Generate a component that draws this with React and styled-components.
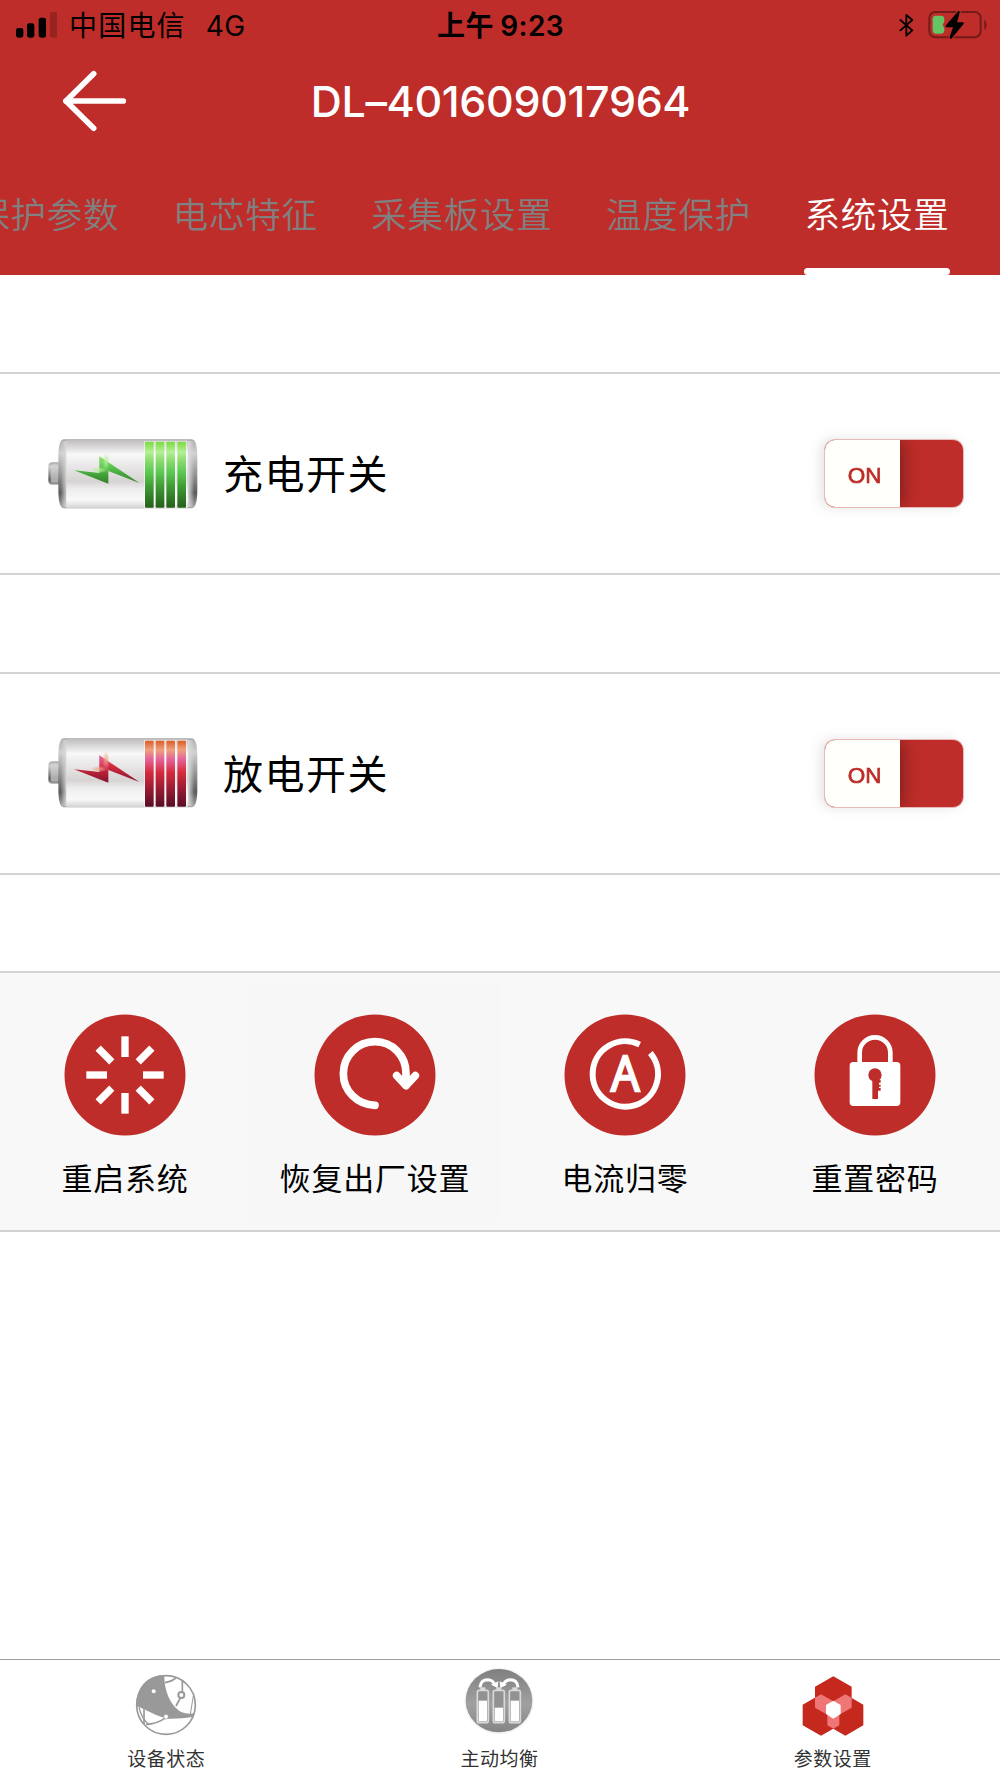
import styled, { createGlobalStyle } from "styled-components";

const RED = "#be2d29";

const GlobalStyle = createGlobalStyle`
  * {
    box-sizing: border-box;
  }

  body {
    margin: 0;
    background-color: #ffffff;
    font-family: Inter, "Noto Sans CJK SC", sans-serif;
    color: #000000;
  }

  svg {
    display: block;
    flex-shrink: 0;
  }
`;

const Screen = styled.div`
  display: flex;
  flex-direction: column;
  width: 1000px;
  height: 1778px;
  overflow: hidden;
`;

const Header = styled.header`
  display: flex;
  flex-direction: column;
  height: 275px;
  background-color: ${RED};
`;

const StatusBar = styled.div`
  display: grid;
  grid-template-columns: 1fr auto 1fr;
  align-items: center;
  height: 50px;
  padding: 0 12px 0 16px;
  font-size: 28px;
  line-height: 48px;
`;

const StatusGroup = styled.div`
  display: flex;
  align-items: center;
  justify-content: ${({ $end }) => ($end ? "flex-end" : "flex-start")};
  gap: ${({ $gap }) => $gap}px;
`;

const Carrier = styled.span`
  padding-top: 2px;
  letter-spacing: 1.2px;
`;

const Network = styled.span`
  margin-left: 8px;
  padding-top: 2px;
  letter-spacing: 0.3px;
`;

const Clock = styled.div`
  padding: 2px 3px 0 0;
  font-weight: 600;
  letter-spacing: 0.4px;
  word-spacing: -1px;
`;

const TitleBar = styled.div`
  display: grid;
  grid-template-columns: 200px 1fr 200px;
  align-items: center;
  height: 101px;
  padding-left: 1px;
`;

const BackButton = styled.button`
  display: flex;
  padding: 0 0 0 61px;
  border: none;
  background: none;
`;

const Title = styled.h1`
  margin: 0;
  color: #ffffff;
  font-size: 43px;
  font-weight: 450;
  letter-spacing: -0.35px;
  text-align: center;
  white-space: nowrap;
`;

const Tabs = styled.nav`
  display: flex;
  justify-content: flex-end;
  gap: 53.5px;
  height: 124px;
  padding-right: 50.5px;
`;

const Tab = styled.div`
  display: flex;
  flex-direction: column;
  justify-content: space-between;
  flex-shrink: 0;
  color: ${({ $active }) => ($active ? "#ffffff" : "#808080")};
  font-size: 35.5px;
  font-weight: 350;
  letter-spacing: 0.75px;
  line-height: 50px;
  padding-top: 40px;
  white-space: nowrap;

  &::after {
    content: "";
    height: 7px;
    border-radius: 4px;
    background-color: ${({ $active }) => ($active ? "#ffffff" : "transparent")};
  }
`;

const Content = styled.main`
  display: flex;
  flex-direction: column;
  flex: 1;
  padding-top: 97px;
`;

const SwitchRow = styled.section`
  display: flex;
  align-items: center;
  height: 203px;
  margin-bottom: 96.5px;
  padding: 0 36px 0 48px;
  border-top: 2px solid #d3d3d3;
  border-bottom: 2px solid #d3d3d3;
`;

const SwitchLabel = styled.span`
  flex: 1;
  padding: 3px 0 0 25px;
  font-size: 40px;
  letter-spacing: 1.5px;
  line-height: 60px;
`;

const Toggle = styled.button`
  display: flex;
  width: 140px;
  height: 69px;
  padding: 0;
  overflow: hidden;
  border: 1px solid #e9b9b8;
  border-radius: 11px;
  background-color: ${RED};
`;

const ToggleShadow = styled.div`
  border-radius: 11px;
  background: radial-gradient(closest-side, rgba(0, 0, 0, 0.2), transparent);
  filter: drop-shadow(-4px 0 6px rgba(0, 0, 0, 0.1));
`;

const Knob = styled.span`
  display: flex;
  align-items: center;
  justify-content: center;
  width: 75px;
  height: 100%;
  padding: 5px 0 0 4px;
  background-color: #fffffc;
  box-shadow: 0 0 18px rgba(0, 0, 0, 0.45);
  color: ${RED};
  font-family: "Liberation Sans", sans-serif;
  font-size: 22.5px;
  -webkit-text-stroke: 0.7px ${RED};
`;

const Actions = styled.section`
  display: grid;
  grid-template-columns: repeat(4, 250px);
  height: 261px;
  padding: 12px 0;
  border-top: 2px solid #d3d3d3;
  border-bottom: 2px solid #d3d3d3;
  background-color: #f8f8f8;
`;

const Action = styled.div`
  display: flex;
  flex-direction: column;
  align-items: center;
  gap: 20px;
  padding-top: 29px;
  background-color: ${({ $pressed }) => ($pressed ? "#f7f7f7" : "transparent")};
  font-size: 31px;
  letter-spacing: 0.8px;
  line-height: 45px;
  white-space: nowrap;
`;

const BottomBar = styled.footer`
  display: grid;
  grid-template-columns: repeat(3, 1fr);
  height: 119px;
  border-top: 1px solid #a0a0a0;
`;

const BottomItem = styled.div`
  display: flex;
  flex-direction: column;
  align-items: center;
  justify-content: space-between;
  padding: 4px 1px 4px 0;
  color: #333333;
  font-size: 19px;
  letter-spacing: 0.5px;
  line-height: 28px;
`;

const SignalIcon = () => (
  <svg width="41" height="26" viewBox="0 0 123 78">
    <rect x="0" y="48" width="22" height="29" rx="7" />
    <rect x="33" y="34" width="22" height="43" rx="7" />
    <rect x="68" y="17" width="22" height="60" rx="7" />
    <rect x="102" y="0" width="22" height="77" rx="7" opacity="0.2" />
  </svg>
);

const BluetoothIcon = () => (
  <svg width="15" height="26" viewBox="0 -4 45 78" fill="none" stroke="#000" strokeWidth="5.5" strokeLinejoin="round" strokeLinecap="round">
    <path d="M4 20 L40 51 L22 67 V5 L40 20 L4 51" />
  </svg>
);

const PhoneBatteryIcon = () => (
  <svg width="60" height="30" viewBox="0 0 180 90">
    <rect x="4" y="6" width="154" height="76" rx="18" fill="none" stroke="#741b19" strokeWidth="6" />
    <path d="M169 28 Q176 33 176 44 Q176 55 169 60 Z" fill="#741b19" />
    <path d="M24 17 H38 Q49 17 49 27 V34 L44 44 L49 55 V60 Q49 71 38 71 H24 Q14 71 14 60 V27 Q14 17 24 17Z" fill="#65c466" />
    <path
      d="M91 3 Q96 2 95 8 L87 37 H106 Q109 39 106 43 L70 86 Q64 88 65 81 L75 52 H55 Q51 50 54 46 Z"
      fill="#000"
      stroke={RED}
      strokeWidth="7"
      paintOrder="stroke"
    />
  </svg>
);

const BackIcon = () => (
  <svg width="66" height="64" viewBox="0 0 198 192" fill="none" stroke="#fff" strokeWidth="17" strokeLinecap="round" strokeLinejoin="round">
    <path d="M95 14 L12 96 L95 178" />
    <path d="M12 96 H184" />
  </svg>
);

const BatteryIcon = ({ id, colors }) => (
  <svg width="150" height="70" viewBox="54 56 450 210">
    <defs>
      <linearGradient id={`${id}-body`} x1="0" y1="0" x2="0" y2="1">
        <stop offset="0" stopColor="#bcbaba" />
        <stop offset="0.08" stopColor="#d2d0d0" />
        <stop offset="0.22" stopColor="#f8f8f8" />
        <stop offset="0.42" stopColor="#e6e4e4" />
        <stop offset="0.61" stopColor="#d6d3d3" />
        <stop offset="0.72" stopColor="#eeeded" />
        <stop offset="0.88" stopColor="#f9f9f9" />
        <stop offset="1" stopColor="#d2d2d2" />
      </linearGradient>
      <linearGradient id={`${id}-end`} x1="0" y1="0" x2="0" y2="1">
        <stop offset="0" stopColor="#aaa" />
        <stop offset="0.2" stopColor="#d0d0d0" />
        <stop offset="0.5" stopColor="#959595" />
        <stop offset="0.78" stopColor="#5c5c5c" />
        <stop offset="1" stopColor="#a8a8a8" />
      </linearGradient>
      <linearGradient id={`${id}-side`} x1="0" y1="0" x2="1" y2="0">
        <stop offset="0" stopColor="#dcdcdc" stopOpacity="0" />
        <stop offset="1" stopColor="#dcdcdc" />
      </linearGradient>
      <linearGradient id={`${id}-bars`} x1="0" y1="64" x2="0" y2="262" gradientUnits="userSpaceOnUse">
        {colors.map(([offset, color]) => (
          <stop key={offset} offset={offset} stopColor={color} />
        ))}
      </linearGradient>
      <linearGradient id={`${id}-bolt`} x1="0" y1="70" x2="0" y2="215" gradientUnits="userSpaceOnUse">
        {colors.map(([offset, color]) => (
          <stop key={offset} offset={offset} stopColor={color} />
        ))}
      </linearGradient>
      <radialGradient id={`${id}-glow`}>
        <stop offset="0" stopColor={colors[1][1]} stopOpacity="0.9" />
        <stop offset="1" stopColor={colors[1][1]} stopOpacity="0" />
      </radialGradient>
    </defs>
    <rect x="55" y="126" width="45" height="67" rx="12" fill={`url(#${id}-end)`} />
    <rect x="62" y="132" width="24" height="54" rx="8" fill="#d4d4d4" opacity="0.65" />
    <path d="M102 57 H484 Q502 57 502 110 V210 Q502 264 484 264 H102 Q85 264 85 210 V110 Q85 57 102 57Z" fill={`url(#${id}-end)`} />
    <rect x="92" y="62" width="20" height="198" fill={`url(#${id}-side)`} />
    <rect x="473" y="62" width="20" height="198" fill={`url(#${id}-side)`} transform="rotate(180 483 161)" />
    <rect x="109" y="57" width="365" height="207" fill={`url(#${id}-body)`} />
    {[345, 377, 409, 442].map((x) => (
      <g key={x}>
        <rect x={x - 3} y="62" width="32" height="202" fill="#fff" opacity="0.5" />
        <rect x={x} y="64" width="26" height="198" rx="3" fill={`url(#${id}-bars)`} />
      </g>
    ))}
    <path d="M132 150 L208 158 V108 L328 188 L235 152 V190 Z" fill={`url(#${id}-bolt)`} />
    <path d="M208 158 V108 L236 127 V152 Z" fill={colors[2][1]} opacity="0.3" />
    <ellipse cx="228" cy="122" rx="11" ry="26" fill={`url(#${id}-glow)`} />
    <ellipse cx="206" cy="149" rx="24" ry="9" fill={`url(#${id}-glow)`} />
  </svg>
);

const greenStops = [
  [0, "#7bdc3c"],
  [0.16, "#b5ef98"],
  [0.28, "#8edc72"],
  [0.46, "#5cc953"],
  [0.68, "#3f9b35"],
  [1, "#255f1a"],
];

const redStops = [
  [0, "#df5c24"],
  [0.14, "#eda17c"],
  [0.28, "#e5639b"],
  [0.48, "#d52b3c"],
  [0.7, "#a11c34"],
  [1, "#580d27"],
];

const Disc = ({ children }) => (
  <svg width="122" height="122" viewBox="0 0 366 366">
    <circle cx="183" cy="183" r="181.5" fill={RED} />
    {children}
  </svg>
);

const RestartIcon = () => (
  <Disc>
    {[0, 45, 90, 135, 180, 225, 270, 315].map((angle) => (
      <rect
        key={angle}
        x="172"
        y={angle % 90 ? 69 : 67}
        width="22"
        height={angle % 90 ? 58 : 62}
        fill="#fff"
        transform={`rotate(${angle} 183 183)`}
      />
    ))}
  </Disc>
);

const ResetIcon = () => (
  <Disc>
    <g fill="none" stroke="#fff" strokeWidth="23" strokeLinecap="round" strokeLinejoin="round">
      <path d="M183 274 C130 272 88 231 88 179 C88 125 131 83 183 83 C236 83 276 126 276 178 V214" />
      <path d="M248 185 L276 215 L304 185" />
    </g>
    <path d="M250 186 H302 L276 215Z" fill="#fff" />
  </Disc>
);

const ZeroIcon = () => (
  <Disc>
    <path d="M227 92 A98 98 0 1 0 259 117" fill="none" stroke="#fff" strokeWidth="18" />
    <text
      x="184"
      y="232"
      fill="#fff"
      stroke="#fff"
      strokeWidth="7"
      fontFamily="Open Sans"
      fontSize="147"
      textAnchor="middle"
      textLength="86"
      lengthAdjust="spacingAndGlyphs"
    >
      A
    </text>
  </Disc>
);

const LockIcon = () => (
  <Disc>
    <path d="M137 150 V116 A46 46 0 0 1 229 116 V150" fill="none" stroke="#fff" strokeWidth="14" />
    <rect x="107" y="144" width="152" height="132" rx="11" fill="#fff" />
    <circle cx="183" cy="183" r="20" fill={RED} />
    <path d="M175 195 H191 V198 H200 V206 H195 V212 H200 V218 H195 V222 H200 V230 H192 V255 H175Z" fill={RED} />
  </Disc>
);

const DeviceIcon = () => (
  <svg width="64" height="68" viewBox="104 66 192 204">
    <g fill="none" stroke="#999" strokeWidth="5">
      <circle cx="200" cy="165" r="88" />
      <path d="M196 98 Q218 95 230 83" />
      <path d="M249 92 V125 M243 144 L230 168" />
      <circle cx="246" cy="135" r="9" strokeWidth="6" />
      <path d="M134 178 V222 M140 223 Q172 223 200 203" />
      <path d="M119 172 Q126 205 150 225" strokeWidth="4" />
      <path d="M272 198 L282 138" strokeWidth="3" />
    </g>
    <path d="M195 75 C194 130 220 174 248 187 Q263 194 284 190 L280 201 Q245 207 205 206 C170 198 145 181 112 168 C108 115 145 73 195 75Z" fill="#999" />
    <circle cx="163" cy="124" r="6" fill="#fff" />
    <circle cx="200" cy="200" r="7" fill="#fff" stroke="#999" strokeWidth="2" />
  </svg>
);

const BalanceIcon = () => (
  <svg width="72" height="70" viewBox="100 44 216 210">
    <defs>
      <linearGradient id="balance" x1="0" y1="0" x2="0" y2="1">
        <stop offset="0" stopColor="#7f7f7f" />
        <stop offset="0.55" stopColor="#a0a0a0" />
        <stop offset="1" stopColor="#858585" />
      </linearGradient>
    </defs>
    <ellipse cx="208" cy="149" rx="104" ry="100" fill="#f4f4f4" />
    <ellipse cx="208" cy="148" rx="100" ry="95" fill="url(#balance)" />
    <g fill="none" stroke="#fff" strokeWidth="9">
      <path d="M151 108 Q153 85 174 85 Q189 86 195 99" />
      <path d="M265 108 Q263 85 242 85 Q227 86 221 99" />
    </g>
    <path d="M184 100 L204 110 L206 90Z M232 100 L212 110 L210 90Z" fill="#fff" />
    {[
      [143, 148],
      [191, 169],
      [239, 148],
    ].map(([x, level]) => (
      <g key={x}>
        <rect x={x + 9} y="108" width="15" height="10" fill="#ddd" />
        <rect x={x} y="117" width="33" height="97" rx="6" fill="#929292" stroke="#d9d9d9" strokeWidth="5" />
        <rect x={x + 4} y={level} width="25" height={210 - level} fill="#fff" />
      </g>
    ))}
  </svg>
);

const SettingsIcon = () => (
  <svg width="62" height="62" viewBox="126 74 186 186">
    <g fill="#c5281c">
      <path d="M220 78 L275 109 V172 L220 203 L165 172 V109Z" />
      <path d="M183 132 L238 163 V225 L183 256 L128 225 V163Z" />
      <path d="M256 132 L310 163 V225 L256 256 L202 225 V163Z" />
    </g>
    <path
      d="M165 142 L183 132 L220 153 L256 132 L275 142 V172 L238 193 V225 L220 235 L202 225 V193 L165 172Z"
      fill="#ee7676"
    />
    <path d="M220 151 L242 164 V191 L220 205 L198 191 V164Z" fill="#fff" />
  </svg>
);

const tabs = ["保护参数", "电芯特征", "采集板设置", "温度保护", "系统设置"];

const switches = [
  { id: "charge", label: "充电开关", colors: greenStops },
  { id: "discharge", label: "放电开关", colors: redStops },
];

const actions = [
  { label: "重启系统", icon: <RestartIcon /> },
  { label: "恢复出厂设置", icon: <ResetIcon />, pressed: true },
  { label: "电流归零", icon: <ZeroIcon /> },
  { label: "重置密码", icon: <LockIcon /> },
];

const bottomItems = [
  { label: "设备状态", icon: <DeviceIcon /> },
  { label: "主动均衡", icon: <BalanceIcon /> },
  { label: "参数设置", icon: <SettingsIcon /> },
];

const IconSlot = styled.div`
  display: flex;
  align-items: center;
  height: 72px;
  padding-top: ${({ $offset }) => $offset}px;
`;

const App = () => {
  return (
    <Screen>
      <GlobalStyle />
      <Header>
        <StatusBar>
          <StatusGroup $gap={12}>
            <SignalIcon />
            <Carrier>中国电信</Carrier>
            <Network>4G</Network>
          </StatusGroup>
          <Clock>上午 9:23</Clock>
          <StatusGroup $end $gap={14}>
            <BluetoothIcon />
            <PhoneBatteryIcon />
          </StatusGroup>
        </StatusBar>
        <TitleBar>
          <BackButton aria-label="返回">
            <BackIcon />
          </BackButton>
          <Title>DL–401609017964</Title>
        </TitleBar>
        <Tabs>
          {tabs.map((tab) => (
            <Tab key={tab} $active={tab === "系统设置"}>
              {tab}
            </Tab>
          ))}
        </Tabs>
      </Header>

      <Content>
        {switches.map(({ id, label, colors }) => (
          <SwitchRow key={id}>
            <BatteryIcon id={id} colors={colors} />
            <SwitchLabel>{label}</SwitchLabel>
            <ToggleShadow>
              <Toggle>
                <Knob>ON</Knob>
              </Toggle>
            </ToggleShadow>
          </SwitchRow>
        ))}
        <Actions>
          {actions.map(({ label, icon, pressed }) => (
            <Action key={label} $pressed={pressed}>
              {icon}
              <span>{label}</span>
            </Action>
          ))}
        </Actions>
      </Content>

      <BottomBar>
        {bottomItems.map(({ label, icon }, index) => (
          <BottomItem key={label}>
            <IconSlot $offset={index === 1 ? 1 : 11}>{icon}</IconSlot>
            <span>{label}</span>
          </BottomItem>
        ))}
      </BottomBar>
    </Screen>
  );
};

export default App;
